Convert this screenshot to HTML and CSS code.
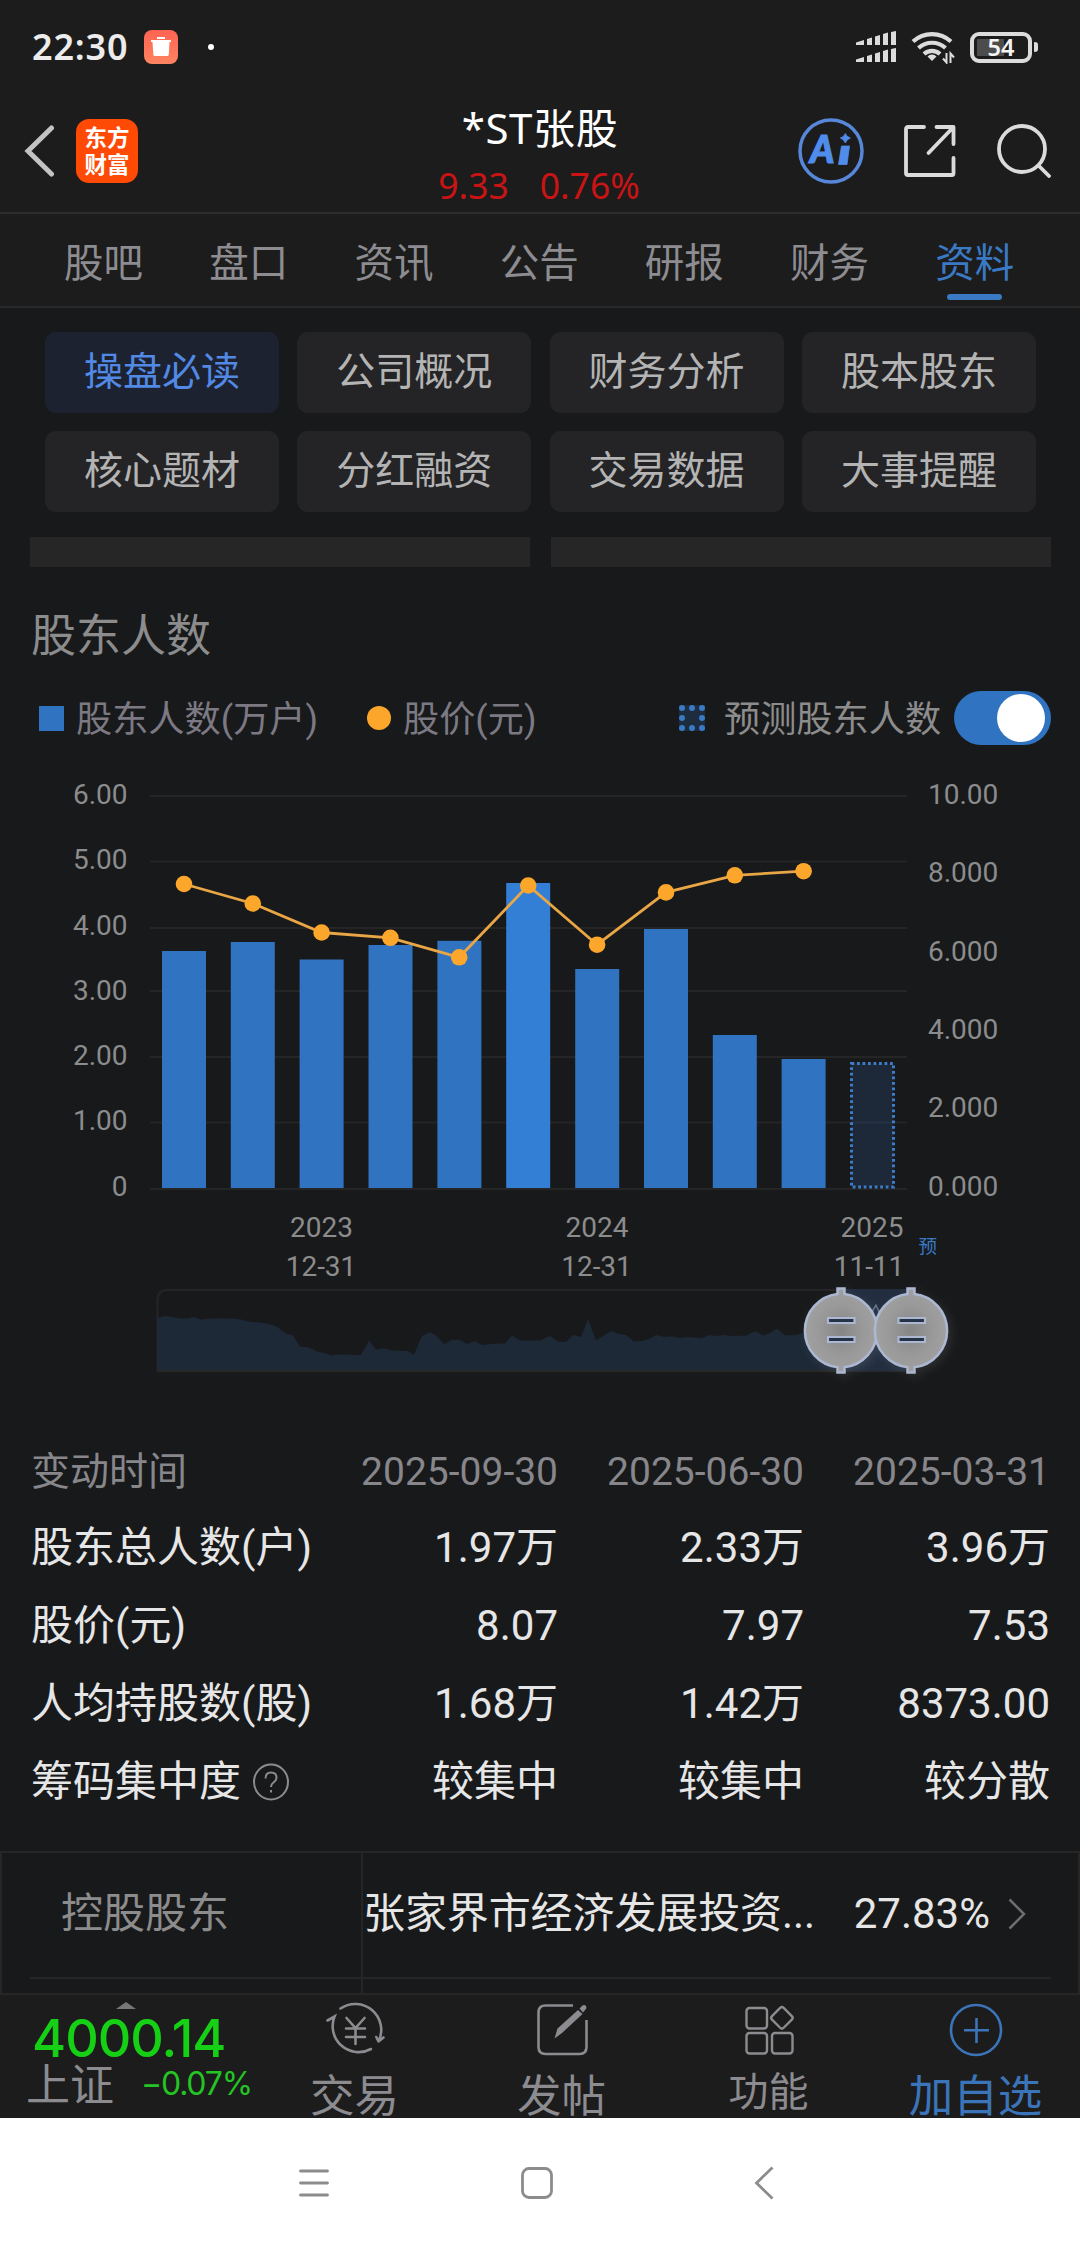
FILE: index.html
```html
<!DOCTYPE html>
<html lang="zh-CN">
<head>
<meta charset="utf-8">
<title>*ST张股</title>
<link rel="stylesheet" href="styles.css">
</head>
<body>
<div class="screen">
  <div class="status">
    <span class="clock">22:30</span>
    <svg class="trash" width="34" height="34" viewBox="0 0 34 34"><defs><linearGradient id="tg" x1="0" y1="0" x2="0" y2="1"><stop offset="0" stop-color="#ff6352"/><stop offset="1" stop-color="#ff8460"/></linearGradient></defs><rect width="34" height="34" rx="8" fill="url(#tg)"/><path d="M13 7h8v2h-8zM7 10h20v2h-1.500l-.7 12.500q-.2 1.500-1.700 1.500H11q-1.500 0-1.700-1.500L8.500 12H7z" fill="#fff"/></svg>
    <i class="dot"></i>
    <svg class="signal" width="40" height="32" viewBox="0 0 40 32" fill="#dcdcdc"><path d="M0 11.500l8-2.500v5H0zM11 8l5-1.500V14h-5zM19 5.500L24 4v10h-5zM27 3l5-1.500V14h-5zM35 1l5-1v14h-5zM0 28.500L8 26v5H0zM11 25l5-1.500V31h-5zM19 22.500l5-1.500v10h-5zM27 20l5-1.500V31h-5zM35 18l5-1v14h-5z"/></svg>
    <svg class="wifi" width="44" height="34" viewBox="0 0 44 34" fill="none" stroke="#dcdcdc" stroke-width="4.200"><path d="M2 11.500a28 28 0 0 1 38 0M7.500 18a20 20 0 0 1 27 0M13 24a12 12 0 0 1 16 0"/><path d="M21 31l-4.500-4.500a6 6 0 0 1 9 0z" fill="#dcdcdc" stroke="none"/><path d="M35.500 23v9.500l-3.500-4M39.500 33v-9.500l3.500 4" stroke-width="2"/></svg>
    <div class="battery"><span>54</span></div><i class="nub"></i>
  </div>

  <header class="header">
    <div class="head-left">
      <svg width="32" height="52" viewBox="0 0 32 52" fill="none" stroke="#c3c3c3" stroke-width="5" stroke-linecap="round"><path d="M28.500 3L5 26l23.500 23"/></svg>
      <div class="brand"><span>东方</span><span>财富</span></div>
    </div>
    <div class="head-title">
      <div class="name">*ST张股</div>
      <div class="quote"><span>9.33</span><span>0.76%</span></div>
    </div>
    <div class="head-right">
      <svg width="66" height="66" viewBox="0 0 66 66"><circle cx="33" cy="33" r="31" fill="none" stroke="#5787d8" stroke-width="3.500"/><text x="12" y="44.500" class="ai">A</text><path d="M43.500 28h8l-2.500 18.500h-8.500zM47.300 15.500q1.300 3.500 5 4.500-3.700 1.300-5 5-1.200-3.700-5-5 3.800-1 5-4.500z" fill="#508cec" stroke="#508cec" stroke-width=".8" stroke-linejoin="round"/></svg>
      <svg width="54" height="54" viewBox="0 0 54 54" fill="none" stroke="#dbdbdb" stroke-width="3.800" stroke-linecap="round" stroke-linejoin="round"><path d="M21 3H5q-2 0-2 2v44q0 2 2 2h44q1.500 0 1.500-2V34M33.500 3h17v17M50 3.500L25.500 29"/></svg>
      <svg width="54" height="54" viewBox="0 0 54 54" fill="none" stroke="#dbdbdb" stroke-width="3.800" stroke-linecap="round"><circle cx="25" cy="25" r="23"/><path d="M42 42l10 10"/></svg>
    </div>
  </header>

  <nav class="tabs"><span>股吧</span><span>盘口</span><span>资讯</span><span>公告</span><span>研报</span><span>财务</span><span class="on">资料</span></nav>

  <div class="pills">
    <span class="on">操盘必读</span><span>公司概况</span><span>财务分析</span><span>股本股东</span>
    <span>核心题材</span><span>分红融资</span><span>交易数据</span><span>大事提醒</span>
  </div>
  <div class="strips"><i></i><i></i></div>

  <h2 class="section">股东人数</h2>
  <div class="legend">
    <i class="sq"></i><span class="l1">股东人数(万户)</span>
    <i class="circ"></i><span class="l2">股价(元)</span>
    <svg class="dots" width="26" height="26" viewBox="0 0 26 26"><rect width="26" height="26" fill="#1d2c3f"/><g fill="#3a7ac4"><circle cx="3" cy="3" r="3"/><circle cx="13" cy="3" r="3"/><circle cx="23" cy="3" r="3"/><circle cx="3" cy="13" r="3"/><circle cx="23" cy="13" r="3"/><circle cx="3" cy="23" r="3"/><circle cx="13" cy="23" r="3"/><circle cx="23" cy="23" r="3"/></g></svg>
    <span class="l3">预测股东人数</span>
    <div class="toggle"><i></i></div>
  </div>

  <svg class="chart" width="1080" height="650" viewBox="0 750 1080 650">
    <defs>
      <radialGradient id="knob"><stop offset="0" stop-color="#858585"/><stop offset=".6" stop-color="#999"/><stop offset="1" stop-color="#a0a0a0"/></radialGradient>
      <filter id="sh" x="-30%" y="-30%" width="160%" height="160%"><feDropShadow dx="3" dy="3" stdDeviation="5" flood-color="#aaa" flood-opacity=".14"/></filter>
    </defs>
    <path d="M150 796H907M150 861.500H907M150 928H907M150 991H907M150 1057H907M150 1122.500H907M150 1189H907" stroke="#252526" stroke-width="2"/>
    <g class="axis" text-anchor="end"><text x="127.500" y="804">6.00</text><text x="127.500" y="869">5.00</text><text x="127.500" y="934.500">4.00</text><text x="127.500" y="1000">3.00</text><text x="127.500" y="1065">2.00</text><text x="127.500" y="1130">1.00</text><text x="127.500" y="1196">0</text></g>
    <g class="axis"><text x="928" y="804">10.00</text><text x="928" y="882">8.000</text><text x="928" y="961">6.000</text><text x="928" y="1039">4.000</text><text x="928" y="1117">2.000</text><text x="928" y="1196">0.000</text></g>
    <g fill="#3073c0">
      <rect x="162" y="951" width="44" height="237"/><rect x="230.800" y="942" width="44" height="246"/><rect x="299.600" y="959.500" width="44" height="228.500"/><rect x="368.500" y="945" width="44" height="243"/><rect x="437.400" y="940.800" width="44" height="247.200"/><rect x="506.200" y="883" width="44" height="305" fill="#337fd6"/><rect x="575.200" y="969" width="44" height="219"/><rect x="644" y="929" width="44" height="259"/><rect x="712.800" y="1035" width="44" height="153"/><rect x="781.600" y="1059" width="44" height="129"/>
    </g>
    <rect x="851.500" y="1063.500" width="42" height="123.500" fill="#1d2939"/>
    <path d="M851.500 1122.500h42" stroke="#253344" stroke-width="2"/>
    <rect x="851.500" y="1063.500" width="42" height="123.500" fill="none" stroke="#3c7cc8" stroke-width="3" stroke-dasharray="2.800 2.700"/>
    <polyline points="184,884 252.800,903.500 321.600,932.500 390.400,937.800 459.200,957.300 528.200,885.500 597.100,944.700 666,892.400 734.800,875.300 803.600,871.200" fill="none" stroke="#e9a646" stroke-width="2.800"/>
    <g fill="#fca72c"><circle cx="184" cy="884" r="8.300"/><circle cx="252.800" cy="903.500" r="8.300"/><circle cx="321.600" cy="932.500" r="8.300"/><circle cx="390.400" cy="937.800" r="8.300"/><circle cx="459.200" cy="957.300" r="8.300"/><circle cx="528.200" cy="885.500" r="8.300"/><circle cx="597.100" cy="944.700" r="8.300"/><circle cx="666" cy="892.400" r="8.300"/><circle cx="734.800" cy="875.300" r="8.300"/><circle cx="803.600" cy="871.200" r="8.300"/></g>
    <g class="axis" text-anchor="middle"><text x="321.500" y="1237">2023</text><text x="321" y="1276">12-31</text><text x="597" y="1237">2024</text><text x="596.500" y="1276">12-31</text><text x="872" y="1237">2025</text><text x="869" y="1276">11-11</text></g>
    <text x="918.500" y="1253" class="forecast">预</text>

    <path d="M157.500 1371V1300q0-10 10-10H905" fill="none" stroke="#252526" stroke-width="2"/>
    <path d="M157 1371V1318L165 1316 173 1317 180 1318.500H188L194 1317 201 1319.500 211 1318.500H231L241 1319.500 248 1321.500 264 1323 271 1324.500 278 1327.500 286 1333.500 293 1335.500 300 1346.500 309 1347.500 317 1351.500 325 1353 331 1355.500 338 1354.500 361 1355 369 1340.500 376 1349.500 384 1348.500 392 1350.500 407 1351 414 1354.500 422 1336 430 1332 437 1336.500 444 1344 452 1340 460 1340 467 1344 475 1341 482 1345 497 1343.500H505L512 1335.500 520 1340.500H540L550 1336 558 1341.500 566 1342 573 1335 581 1337 588 1319 596 1340.500 611 1331 619 1334 626 1335 634 1341.500 642 1341 649 1339 656 1335 664 1337 672 1336.500 679 1338 687 1337 702 1338 709 1335 717 1336 724 1335 732 1336 747 1335.500 755 1331 763 1335.500 770 1333 777 1328.500 785 1335.500 795 1335 803 1333H841V1371z" fill="#1e2938"/>
    <path d="M157 1371H905" stroke="#282829" stroke-width="2"/>
    <rect x="841" y="1289" width="70" height="82" fill="#222e40"/>
    <path d="M864 1331l5-7 4-14 3-5 4 9 3 5" fill="none" stroke="#66748c" stroke-width="1.500"/>
    <g fill="url(#knob)" stroke="#acb8d1" stroke-width="2.500">
      <g filter="url(#sh)"><path d="M837.500 1294V1288.500h7v5.500A36.900 36.900 0 0 1 844.500 1367.300v5.200h-7v-5.200A36.900 36.900 0 0 1 837.500 1294z"/><path d="M828 1318h26.500v5H828zM828 1337h26.500v5H828z" fill="#273044" stroke-width="2.200"/></g>
      <g filter="url(#sh)"><path d="M907.500 1294V1288.500h7v5.500A36.900 36.900 0 0 1 914.500 1367.300v5.200h-7v-5.200A36.900 36.900 0 0 1 907.500 1294z"/><path d="M898.500 1318H925v5H898.500zM898.500 1337H925v5H898.500z" fill="#273044" stroke-width="2.200"/></g>
    </g>
  </svg>

  <div class="table">
    <div class="row head"><span>变动时间</span><span>2025-09-30</span><span>2025-06-30</span><span>2025-03-31</span></div>
    <div class="row"><span>股东总人数(户)</span><span>1.97万</span><span>2.33万</span><span>3.96万</span></div>
    <div class="row"><span>股价(元)</span><span>8.07</span><span>7.97</span><span>7.53</span></div>
    <div class="row"><span>人均持股数(股)</span><span>1.68万</span><span>1.42万</span><span>8373.00</span></div>
    <div class="row"><span class="with-help">筹码集中度<svg width="36" height="38" viewBox="0 0 36 38" fill="none" stroke="#8c8c8c" stroke-width="2"><ellipse cx="18" cy="19" rx="17" ry="17.500"/><path d="M12.500 15.500q0-6 5.500-6t5.500 5q0 3-3 5-2.500 1.700-2.500 4.500M18 27v2.500"/></svg></span><span>较集中</span><span>较集中</span><span>较分散</span></div>
  </div>

  <div class="holder">
    <div class="holder-row">
      <span class="key">控股股东</span>
      <div class="val"><span>张家界市经济发展投资...</span><span class="pct">27.83%</span><svg width="18" height="32" viewBox="0 0 18 32" fill="none" stroke="#6e6e6e" stroke-width="2.500"><path d="M1.500 1.500L16 16 1.500 30.500"/></svg></div>
    </div>
    <div class="holder-row next"><span class="key"></span></div>
  </div>

  <footer class="bottom">
    <div class="index">
      <svg width="20" height="7" viewBox="0 0 20 7"><path d="M0 7L10 0l10 7z" fill="#78787b"/></svg>
      <div class="points">4000.14</div>
      <div class="sub"><span>上证</span><b>−0.07%</b></div>
    </div>
    <div class="act">
      <svg width="60" height="56" viewBox="0 0 60 56" fill="none" stroke="#8b8b90" stroke-width="2.600" stroke-linecap="round"><path d="M15.500 7.500A26 26 0 0 1 53.500 40.500l5-4M46 48A26 26 0 0 1 9.500 15.500l-7 4M53.500 40.500l-2.200-4.500"/><path d="M21.500 17l9 10 9-10M21 27.500h19M21 36h19M30.500 27.500V43"/></svg>
      <span>交易</span>
    </div>
    <div class="act">
      <svg width="60" height="56" viewBox="0 0 60 56" fill="none" stroke="#8b8b90" stroke-width="2.600"><path d="M41 4.500H13.500q-7 0-7 7V46q0 7 7 7h34q7 0 7-7V19"/><path d="M22.500 37.500l3-10L46 9l4.500 4L30 32zM47.500 7.500l3-3q2-1 3.500.5 1 2-.5 3.500l-2.500 3z" fill="#8b8b90" stroke="none"/></svg>
      <span>发帖</span>
    </div>
    <div class="act small">
      <svg width="60" height="56" viewBox="0 0 60 56" fill="none" stroke="#8b8b90" stroke-width="2.400"><rect x="7.500" y="7" width="20.500" height="20.500" rx="3"/><rect x="7.500" y="32" width="20.500" height="20.500" rx="3"/><rect x="33" y="32" width="20.500" height="20.500" rx="3"/><rect x="34.500" y="8.500" width="16.500" height="16.500" rx="2.500" transform="rotate(45 42.700 17)"/></svg>
      <span>功能</span>
    </div>
    <div class="act blue">
      <svg width="60" height="56" viewBox="0 0 60 56" fill="none" stroke="#3b74b8" stroke-width="2.600"><circle cx="30" cy="29" r="25"/><path d="M18 29.300h25M30.500 17v25"/></svg>
      <span>加自选</span>
    </div>
  </footer>

  <div class="sysnav">
    <svg width="30" height="30" viewBox="0 0 30 30" stroke="#8c8c8c" stroke-width="2.800" stroke-linecap="round"><path d="M1.500 3h27M1.500 15h27M1.500 27h27"/></svg>
    <svg width="32" height="32" viewBox="0 0 32 32" fill="none" stroke="#8c8c8c" stroke-width="2.800"><rect x="1.500" y="1.500" width="29" height="29" rx="6.500"/></svg>
    <svg width="20" height="34" viewBox="0 0 20 34" fill="none" stroke="#8c8c8c" stroke-width="2.800"><path d="M18.500 1.500L2.500 17l16 15.500"/></svg>
  </div>
</div>
</body>
</html>
```
FILE: styles.css
```css
* { box-sizing: border-box; }
html, body { margin: 0; background: #18191b; }
.screen {
  width: 1080px; height: 2248px; overflow: hidden;
  font-family: Roboto, "Noto Sans CJK SC", sans-serif;
  color: #e6e6e6;
}
svg { display: block; flex: none; }
i { display: block; flex: none; }

.status { height: 94px; background: #1c1c1c; display: flex; align-items: center; padding-left: 32px; }
.clock { font: 600 36px/40px "Noto Sans", sans-serif; letter-spacing: .8px; width: 112px; white-space: nowrap; color: #ececec; }
.dot { width: 6px; height: 6px; border-radius: 3px; background: #fff; margin-left: 30px; }
.signal { margin-left: 642px; }
.wifi { margin-left: 15px; }
.battery {
  margin-left: 15px; width: 62px; height: 31px; border: 4px solid #dcdcdc; border-radius: 9px;
  background: linear-gradient(90deg, #4c4c4c 27px, transparent 27px) 3px 3px / 48px 17px no-repeat;
  display: flex; align-items: center; justify-content: center;
  font: 600 23.500px/23px "Noto Sans", sans-serif; color: #f4f4f4;
}
.nub { width: 4px; height: 10px; border-radius: 1px 3px 3px 1px; background: #dcdcdc; margin-left: 2px; }

.header {
  height: 120px; background: #1c1c1c; border-bottom: 2px solid #2d2d2e;
  display: grid; grid-template-columns: 340px 400px 340px;
}
.head-left { display: flex; align-items: center; height: 114px; padding-left: 23px; gap: 21px; }
.brand {
  width: 62px; height: 64px; border-radius: 13px; background: #ff4a05; color: #fff;
  font: 700 22.500px/27px "Noto Sans CJK SC", sans-serif;
  display: flex; flex-direction: column; align-items: center; justify-content: center; padding-bottom: 2px;
}
.head-title { text-align: center; }
.name { font: 400 42px/46px "Noto Sans", "Noto Sans CJK SC", sans-serif; letter-spacing: .6px; color: #fff; margin-top: 11px; white-space: nowrap; }
.quote { display: flex; justify-content: center; gap: 31px; font: 400 35.500px/40px "Noto Sans", sans-serif; color: #c81414; margin: 14px 2px 0 0; }
.head-right { display: flex; align-items: center; height: 114px; padding-left: 58px; gap: 39px; }
.head-right svg + svg + svg { margin-left: 1px; }
.ai { font: italic 900 37px Lato, sans-serif; fill: #508cec; stroke: #508cec; stroke-width: 1.2px; }

.tabs {
  height: 94px; background: #1c1c1c; border-bottom: 2px solid #29292a;
  display: grid; grid-template-columns: repeat(7, 145.2px); padding-left: 31px;
  font-size: 39.500px; line-height: 99px; text-align: center; color: #8c8c91;
}
.tabs .on { color: #3a79c4; display: flex; flex-direction: column; align-items: center; }
.tabs .on::after { content: ""; width: 55px; height: 6px; border-radius: 3px; background: #3a79c4; margin-top: -19px; }

.pills { display: grid; grid-template-columns: repeat(4, 234px); gap: 18px 18.300px; padding: 24px 0 0 45px; }
.pills span {
  height: 81px; border-radius: 11px; background: #242426; color: #b4b4b4;
  font-size: 39px; line-height: 80px; text-align: center;
}
.pills .on { background: #1c2230; color: #5289e4; }
.strips { display: grid; grid-template-columns: 500px 500px; gap: 21px; padding: 25px 0 0 30px; }
.strips i { height: 30px; background: #262626; }

.section { margin: 45px 0 0 31px; font-size: 45px; font-weight: 400; line-height: 50px; color: #8c8c8c; }
.legend { height: 54px; margin: 29px 29px 0 39px; display: flex; align-items: center; font-size: 36.200px; line-height: 50px; color: #7c7983; white-space: nowrap; }
.legend span { padding-top: 4px; }
.sq { width: 25px; height: 25px; background: #3073c0; }
.l1 { margin-left: 12px; width: 240px; }
.circ { width: 24px; height: 24px; border-radius: 50%; background: #fca72c; margin-left: 51px; }
.l2 { margin-left: 12px; width: 134px; }
.dots { margin-left: 142px; }
.legend .l3 { margin-left: 19px; width: 230px; font-size: 36.200px; color: #8c8c8c; }
.toggle { width: 97px; height: 54px; border-radius: 27px; background: #3073c0; padding: 3px 6px; display: flex; justify-content: flex-end; }
.toggle i { width: 48px; height: 48px; border-radius: 50%; background: #fff; }

.chart { margin-top: 5px; }
.axis { font: 28px Roboto, sans-serif; fill: #8c8c8c; }
.forecast { font: 18.500px "Noto Sans CJK SC", sans-serif; fill: #3a79c4; }

.table { padding: 33px 29px 0 31px; }
.row { display: grid; grid-template-columns: 281px 246px 246px 246px; height: 78px; font-size: 42px; line-height: 78px; text-align: right; white-space: nowrap; }
.row span:first-child { text-align: left; }
.head { height: 76px; font-size: 39px; color: #87878b; }
.with-help { display: flex; align-items: center; gap: 12px; }

.holder { height: 142px; margin-top: 30px; border: 2px solid #262627; border-bottom: 0; }
.holder-row { display: flex; height: 125px; font-size: 42px; line-height: 121px; white-space: nowrap; }
.key { width: 361px; flex: none; border-right: 2px solid #262627; padding-left: 59px; color: #8c8c8c; }
.val { flex: 1; display: flex; align-items: center; height: 121px; }
.val span:first-child { letter-spacing: -.1px; }
.pct { margin-left: auto; }
.val svg { margin: 0 52px 0 18px; }
.next { height: 15px; position: relative; }
.next::before { content: ""; position: absolute; left: 28px; right: 27px; top: -1px; height: 2px; background: #262627; }

.bottom { height: 125px; background: #1c1c1c; border-top: 2px solid #262627; display: flex; overflow: hidden; }
.index { width: 251px; padding: 7px 0 0 26px; }
.index svg { margin-left: 90px; }
.points { font: 450 52px/40px Inter, sans-serif; letter-spacing: -1px; color: #16d016; margin: 10px 0 0 6px; }
.sub { display: flex; color: #8b8b90; font-size: 44px; line-height: 44px; margin-top: 5px; white-space: nowrap; }
.sub b { font: 400 32px/40px Inter, sans-serif; letter-spacing: -1.200px; color: #23c423; margin-left: 27px; }
.act { width: 207px; display: flex; flex-direction: column; align-items: center; font-size: 44.500px; line-height: 44px; color: #8b8b90; padding-top: 6px; }
.act span { margin-top: 18px; }
.small { font-size: 40px; }
.small span { margin-top: 14px; }
.blue { color: #3b74b8; }

.sysnav { height: 130px; background: #fff; display: flex; align-items: center; padding: 0 0 0 299px; }
.sysnav svg + svg { margin-left: 192px; }
.sysnav svg + svg + svg { margin-left: 201px; }
```
